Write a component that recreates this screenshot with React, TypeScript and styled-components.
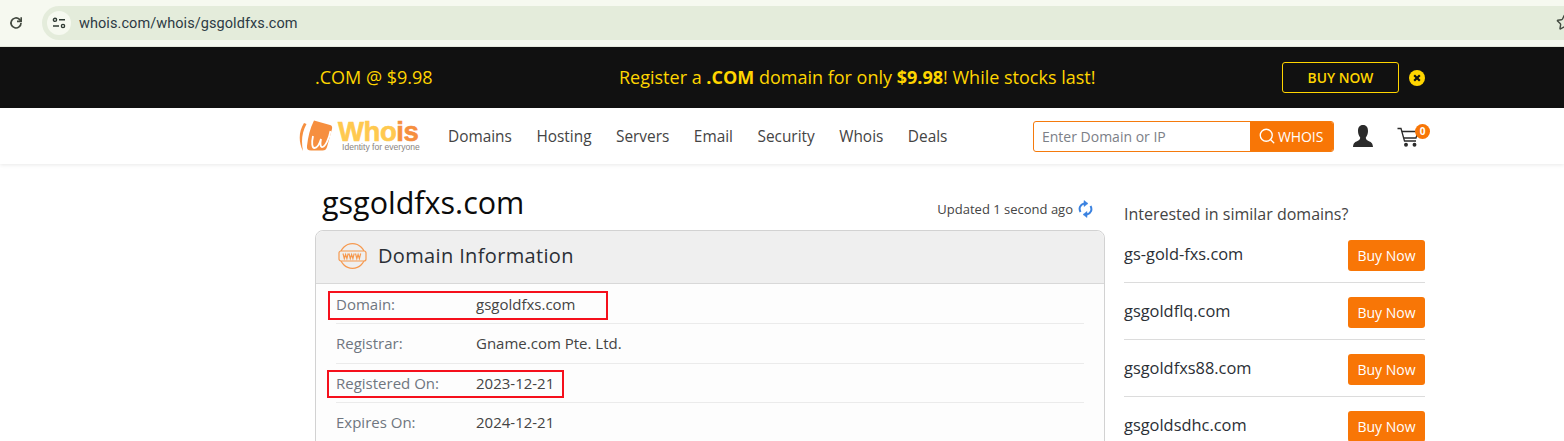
import React from 'react';
import styled, { createGlobalStyle } from 'styled-components';
import { Search, Star } from 'lucide-react';

const similarDomains = ['gs-gold-fxs.com', 'gsgoldflq.com', 'gsgoldfxs88.com', 'gsgoldsdhc.com'];
const navItems = ['Domains', 'Hosting', 'Servers', 'Email', 'Security', 'Whois', 'Deals'];

const GlobalStyle = createGlobalStyle`
  html, body {
    margin: 0;
    padding: 0;
    height: 441px;
    overflow: hidden;
    background: #fff;
    font-family: "Open Sans", "Liberation Sans", sans-serif;
  }
  * {
    box-sizing: border-box;
  }
`;

const Page = styled.div`
  width: 1564px;
  height: 441px;
  overflow: hidden;
`;

const BrowserBar = styled.div`
  display: flex;
  align-items: center;
  height: 47px;
  padding: 0 0 1px 8px;
  background: #f6f9f0;
  border-bottom: 1px solid #e4e8dc;
`;

const ReloadButton = styled.div`
  display: flex;
  width: 16px;
  height: 16px;
  margin-right: 18px;
  color: #434a40;
`;

const AddressPill = styled.div`
  flex: 1;
  display: flex;
  align-items: center;
  justify-content: space-between;
  height: 34px;
  padding: 0 0 0 5px;
  border-radius: 17px 0 0 17px;
  background: #e4ecdb;
  overflow: hidden;
`;

const SiteInfo = styled.div`
  display: flex;
  align-items: center;
  justify-content: center;
  width: 24px;
  height: 24px;
  margin-right: 8px;
  border-radius: 50%;
  background: #f6f9f0;
`;

const UrlText = styled.span`
  flex: 1;
  padding-top: 1px;
  font-family: "Roboto", "Liberation Sans", sans-serif;
  font-size: 14.5px;
  letter-spacing: 0.07px;
  color: #2c3a44;
`;

const StarSlot = styled.div`
  display: flex;
  flex: 0 0 8px;
  width: 8px;
  overflow: hidden;
  color: #434a40;
  svg {
    flex-shrink: 0;
  }
`;

const PromoBar = styled.div`
  height: 61px;
  background: #111;
  color: #ffd500;
  font-size: 18px;
  padding: 0 139px 0 315px;
  display: flex;
  align-items: center;
`;

const PromoPrice = styled.span`
  width: 304px;
  padding-bottom: 2px;
`;

const PromoText = styled.span`
  width: 663px;
  padding-bottom: 2px;
  b {
    font-weight: 700;
  }
`;

const OutlineButton = styled.div`
  display: flex;
  align-items: center;
  justify-content: center;
  width: 117px;
  height: 31px;
  margin-right: 10px;
  border: 1px solid #ffd500;
  border-radius: 3px;
  font-size: 13.8px;
  font-weight: 600;
`;

const CloseDot = styled.svg`
  width: 16px;
  height: 16px;
`;

const Header = styled.header`
  position: relative;
  display: flex;
  align-items: center;
  height: 56px;
  padding-left: 299px;
  background: #fff;
  box-shadow: 0 1px 4px rgba(0, 0, 0, 0.09);
`;

const Logo = styled.div`
  display: flex;
  align-items: center;
  width: 149px;
`;

const LogoWords = styled.div`
  display: flex;
  flex-direction: column;
  margin-left: 5px;
  padding-top: 1px;
`;

const LogoName = styled.div`
  font-family: "Liberation Sans", Arial, sans-serif;
  font-size: 27.500px;
  line-height: 22px;
  font-weight: 700;
  letter-spacing: -0.4px;
  color: #ffc94f;
  -webkit-text-stroke: 0.6px currentColor;
  span {
    color: #f68f3f;
  }
`;

const LogoTag = styled.div`
  font-family: "Liberation Sans", Arial, sans-serif;
  font-size: 8.600px;
  line-height: 9px;
  margin-left: 4px;
  color: #8a8480;
  white-space: nowrap;
`;

const Nav = styled.nav`
  display: flex;
  gap: 24.500px;
  width: 585px;
`;

const NavLink = styled.a`
  font-size: 15.400px;
  font-weight: 500;
  color: #444;
`;

const SearchBox = styled.div`
  display: flex;
  width: 301px;
  height: 31px;
  border: 1px solid #f57a0c;
  border-radius: 3px;
  overflow: hidden;
  margin-right: 19px;
`;

const SearchInput = styled.div`
  flex: 1;
  padding-left: 8px;
  font-size: 14px;
  line-height: 29px;
  color: #7c8087;
`;

const SearchButton = styled.div`
  display: flex;
  align-items: center;
  gap: 2px;
  width: 83px;
  padding-left: 8px;
  background: #f87606;
  color: #fff;
  font-size: 14px;
  letter-spacing: -0.1px;
`;

const UserIcon = styled.svg`
  width: 20px;
  height: 22px;
  margin-right: 24px;
  fill: #2b2b2b;
`;

const CartWrap = styled.div`
  position: relative;
  width: 24px;
  height: 22px;
  margin-top: 2px;
`;

const CartBadge = styled.span`
  position: absolute;
  top: -2px;
  left: 18px;
  width: 15px;
  height: 15px;
  border-radius: 50%;
  background: #f87606;
  color: #fff;
  font-size: 10px;
  font-weight: 700;
  line-height: 15px;
  text-align: center;
`;

const Content = styled.main`
  display: grid;
  grid-template-columns: 790px 301px;
  column-gap: 19px;
  padding-left: 315px;
`;

const MainColumn = styled.section`
  display: flex;
  flex-direction: column;
`;

const TitleRow = styled.div`
  display: flex;
  align-items: center;
  justify-content: space-between;
  height: 66px;
  padding: 10px 12px 0 7px;
`;

const DomainTitle = styled.h1`
  margin: 0;
  font-size: 30.500px;
  line-height: 42px;
  font-weight: 400;
  color: #0b0b0b;
`;

const Updated = styled.div`
  display: flex;
  align-items: center;
  gap: 5px;
  padding-top: 13px;
  font-size: 13px;
  color: #444;
`;

const InfoCard = styled.div`
  position: relative;
  border: 1px solid #d2d2d2;
  border-radius: 8px 8px 0 0;
  height: 260px;
  background: #fdfdfd;
`;

const CardHeader = styled.div`
  display: flex;
  align-items: center;
  gap: 11px;
  height: 53px;
  padding: 0 0 3px 22px;
  background: #efefef;
  border-bottom: 1px solid #d8d8d8;
  border-radius: 8px 8px 0 0;
`;

const CardTitle = styled.h2`
  margin: 0;
  font-size: 20px;
  font-weight: 500;
  letter-spacing: 0.35px;
  color: #2b2f36;
`;

const InfoRows = styled.div`
  padding: 0.500px 20px 0;
`;

const InfoRow = styled.div`
  display: grid;
  grid-template-columns: 140px 1fr;
  align-items: center;
  height: 39.500px;
  border-bottom: 1px solid #ebebeb;
  font-size: 15px;
`;

const InfoLabel = styled.span`
  color: #6f7680;
`;

const InfoValue = styled.span`
  color: #444;
`;

// red boxes drawn over the screenshot by whoever annotated it
const Highlight = styled.div<{ $left: number; $top: number; $width: number; $height: number }>`
  position: absolute;
  left: ${p => p.$left}px;
  top: ${p => p.$top}px;
  width: ${p => p.$width}px;
  height: ${p => p.$height}px;
  border: 2px solid #f5101c;
`;

const Sidebar = styled.aside`
  display: flex;
  flex-direction: column;
  padding-top: 39px;
`;

const SidebarTitle = styled.div`
  font-size: 16px;
  line-height: 22px;
  color: #444;
  margin-bottom: 15px;
`;

const SuggestRow = styled.div`
  display: flex;
  align-items: flex-start;
  justify-content: space-between;
  height: 43px;
  margin-bottom: 14px;
  border-bottom: 1px solid #dcdcdc;
  &:last-child {
    border-bottom: 0;
  }
`;

const SuggestName = styled.span`
  font-size: 16.400px;
  line-height: 28px;
  font-weight: 500;
  color: #2b2f36;
`;

const BuyButton = styled.div`
  display: flex;
  align-items: center;
  justify-content: center;
  width: 77px;
  height: 31px;
  border-radius: 3px;
  background: #f87606;
  color: #fff;
  font-size: 14px;
`;

export default function App() {
  return (
    <Page>
      <GlobalStyle />
      <BrowserBar>
        <ReloadButton>
          <svg width="16" height="16" viewBox="0 0 16 16" fill="none" stroke="currentColor" strokeWidth="1.7">
            <path d="M13 8a5 5 0 1 1-1.5-3.6L13 6" />
            <path d="M13.2 2.2v4.2H9" strokeWidth="1.6" />
          </svg>
        </ReloadButton>
        <AddressPill>
          <SiteInfo>
            <svg width="14" height="12" viewBox="0 0 14 12" fill="none" stroke="#2f3a33" strokeWidth="1.4">
              <circle cx="3" cy="2.8" r="1.6" />
              <path d="M7 2.8h6" />
              <path d="M1 9h6" />
              <circle cx="11" cy="9" r="1.6" />
            </svg>
          </SiteInfo>
          <UrlText>whois.com/whois/gsgoldfxs.com</UrlText>
          <StarSlot>
            <Star size={17} strokeWidth={2} />
          </StarSlot>
        </AddressPill>
      </BrowserBar>

      <PromoBar>
        <PromoPrice>.COM @ $9.98</PromoPrice>
        <PromoText>
          Register a <b>.COM</b> domain for only <b>$9.98</b>! While stocks last!
        </PromoText>
        <OutlineButton>BUY NOW</OutlineButton>
        <CloseDot viewBox="0 0 16 16">
          <circle cx="8" cy="8" r="8" fill="#ffd500" />
          <path d="M5.2 5.2l5.6 5.6M10.8 5.2l-5.6 5.6" stroke="#111" strokeWidth="2.2" />
        </CloseDot>
      </PromoBar>

      <Header>
        <Logo>
          <svg width="34" height="34" viewBox="0 0 34 34">
            <path d="M5 4C0 12 -1 22 4 32C2 22 3 13 7.500 5Z" fill="#f68f3f" />
            <path
              d="M15 1.500L31 6C33 6.500 33.500 8 33 10L28 28C27.300 30.500 26 31.500 23.500 31.500L12 31.500C9 31.500 7.500 30 8 27C9 18 11 9 15 1.500Z"
              fill="#f68f3f"
            />
            <path
              d="M14 17C12.500 24 13 29 15.500 29C18 29 20.500 25 22 20C21 25 21.500 28.500 23.500 28C26.500 27 30 20 31.500 12"
              fill="none"
              stroke="#fff"
              strokeWidth="1.8"
            />
          </svg>
          <LogoWords>
            <LogoName>
              Who<span>is</span>
            </LogoName>
            <LogoTag>Identity for everyone</LogoTag>
          </LogoWords>
        </Logo>
        <Nav>
          {navItems.map(item => (
            <NavLink key={item}>{item}</NavLink>
          ))}
        </Nav>
        <SearchBox>
          <SearchInput>Enter Domain or IP</SearchInput>
          <SearchButton>
            <Search size={18} strokeWidth={1.8} />
            WHOIS
          </SearchButton>
        </SearchBox>
        <UserIcon viewBox="0 0 20 22">
          <path d="M10 0C6.500 0 5 2.500 5 6C5 9 6 11 7.200 12.500C7.200 14 6.500 15 4.500 16C2 17 0.300 18 0 22L20 22C19.700 18 18 17 15.500 16C13.500 15 12.800 14 12.800 12.500C14 11 15 9 15 6C15 2.500 13.500 0 10 0Z" />
        </UserIcon>
        <CartWrap>
          <svg width="24" height="22" viewBox="0 0 24 22" fill="none" stroke="#2b2b2b" strokeWidth="1.3">
            <path d="M0.500 2.500H4L7.500 15H19" />
            <path d="M5 5.500H21L19 12H7" />
            <circle cx="9" cy="18.800" r="1.300" fill="#2b2b2b" />
            <circle cx="17.500" cy="18.800" r="1.300" fill="#2b2b2b" />
          </svg>
          <CartBadge>0</CartBadge>
        </CartWrap>
      </Header>

      <Content>
        <MainColumn>
          <TitleRow>
            <DomainTitle>gsgoldfxs.com</DomainTitle>
            <Updated>
              <div>Updated 1 second ago</div>
              <svg width="15" height="18" viewBox="0 0 15 18" fill="none" stroke="#3b82e0" strokeWidth="2">
                <path d="M2.500 12C0.500 8.500 2 4.500 6 3.500" />
                <path d="M12.500 6C14.500 9.500 13 13.500 9 14.500" />
                <path d="M6 0.500L10 3.500L6 6.500Z" fill="#3b82e0" strokeWidth="0.5" />
                <path d="M9 11.500L5 14.500L9 17.500Z" fill="#3b82e0" strokeWidth="0.5" />
              </svg>
            </Updated>
          </TitleRow>
          <InfoCard>
            <CardHeader>
              <svg width="29" height="26" viewBox="0 0 29 26" fill="none" stroke="#f6994f" strokeWidth="1.200">
                <circle cx="14.500" cy="13" r="12.400" />
                <rect x="1" y="8" width="27" height="10" rx="2" fill="#efefef" />
                <path d="M5 10.500l1.300 5 1.300-4 1.300 4 1.300-5M11 10.500l1.300 5 1.300-4 1.300 4 1.300-5M17.500 10.500l1.300 5 1.300-4 1.300 4 1.300-5" />
              </svg>
              <CardTitle>Domain Information</CardTitle>
            </CardHeader>
            <InfoRows>
              <InfoRow>
                <InfoLabel>Domain:</InfoLabel>
                <InfoValue>gsgoldfxs.com</InfoValue>
              </InfoRow>
              <InfoRow>
                <InfoLabel>Registrar:</InfoLabel>
                <InfoValue>Gname.com Pte. Ltd.</InfoValue>
              </InfoRow>
              <InfoRow>
                <InfoLabel>Registered On:</InfoLabel>
                <InfoValue>2023-12-21</InfoValue>
              </InfoRow>
              <InfoRow>
                <InfoLabel>Expires On:</InfoLabel>
                <InfoValue>2024-12-21</InfoValue>
              </InfoRow>
            </InfoRows>
            <Highlight $left={12} $top={60} $width={280} $height={29} />
            <Highlight $left={11} $top={139} $width={237} $height={28} />
          </InfoCard>
        </MainColumn>
        <Sidebar>
          <SidebarTitle>Interested in similar domains?</SidebarTitle>
          {similarDomains.map(name => (
            <SuggestRow key={name}>
              <SuggestName>{name}</SuggestName>
              <BuyButton>Buy Now</BuyButton>
            </SuggestRow>
          ))}
        </Sidebar>
      </Content>
    </Page>
  );
}
